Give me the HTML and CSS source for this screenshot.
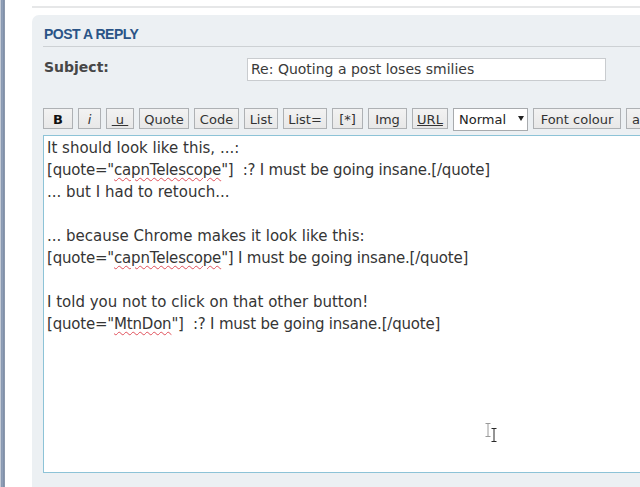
FILE: index.html
```html
<!DOCTYPE html>
<html>
<head>
<meta charset="utf-8">
<link rel="stylesheet" href="styles.css">
</head>
<body>
<div class="page">
  <div class="edge"></div>
  <div class="content">
    <div class="topline"></div>
    <div class="panel">
      <h3 class="title">POST A REPLY</h3>
      <div class="subject-row">
        <label class="label">Subject:</label>
        <div class="input">Re: Quoting a post loses smilies</div>
      </div>
      <div class="toolbar">
        <span class="btn w-b"><b>B</b></span>
        <span class="btn w-i"><i>i</i></span>
        <span class="btn w-u"><span class="ul">&nbsp;u&nbsp;</span></span>
        <span class="btn w-quote">Quote</span>
        <span class="btn w-code">Code</span>
        <span class="btn w-list">List</span>
        <span class="btn w-liste">List=</span>
        <span class="btn w-star">[*]</span>
        <span class="btn w-img">Img</span>
        <span class="btn w-url"><span class="ul">URL</span></span>
        <span class="select">Normal<svg class="caret" width="6" height="5" viewBox="0 0 6 5"><path d="M0 0H6L3 5Z" fill="#222"/></svg></span>
        <span class="btn w-font">Font colour</span>
        <span class="btn w-a">a</span>
      </div>
      <div class="editor">
        <div class="line">It should look like this, ...:</div>
        <div class="line q">[quote="<span class="sp">capnTelescope</span>"]  :? I must be going insane.[/quote]</div>
        <div class="line">... but I had to retouch...</div>
        <div class="line"> </div>
        <div class="line">... because Chrome makes it look like this:</div>
        <div class="line q">[quote="<span class="sp">capnTelescope</span>"] I must be going insane.[/quote]</div>
        <div class="line"> </div>
        <div class="line">I told you not to click on that other button!</div>
        <div class="line q">[quote="<span class="sp">MtnDon</span>"]  :? I must be going insane.[/quote]</div>
        <svg class="cursor" width="16" height="22" viewBox="0 0 16 22">
          <g stroke="#9a9a9a" stroke-width="1" fill="none">
            <path d="M1.5 2.5H6.5M4 2.5V15.5M1.5 15.5H6.5"/>
          </g>
          <g stroke="#2a2a2a" stroke-width="1" fill="none">
            <path d="M7.5 7.5H12.5M10 7.5V20.5M7.5 20.5H12.5"/>
          </g>
        </svg>
      </div>
    </div>
  </div>
</div>
</body>
</html>
```
FILE: styles.css
```css
html, body {
  margin: 0;
  padding: 0;
  background: #ffffff;
}
body {
  width: 640px;
  height: 487px;
  overflow: hidden;
  font-family: "DejaVu Sans", Verdana, sans-serif;
  color: #333;
}
.page {
  display: flex;
  height: 487px;
}
.edge {
  flex: none;
  width: 5px;
  background: linear-gradient(to right, #c3cad6 0, #c3cad6 1px, #8797b0 1px, #92a2ba 3px, #6f7f99 4px, #a9b2c0 5px);
}
.content {
  flex: 1;
  display: flex;
  flex-direction: column;
  padding: 6px 0 0 27px;
  min-width: 0;
}
.topline {
  height: 2px;
  background: #e6e7e8;
  margin-bottom: 7px;
}
.panel {
  flex: 1;
  background: #ecf0f3;
  border-radius: 7px 0 0 0;
  padding: 11px 0 0 11px;
  overflow: hidden;
}
.title {
  margin: 0;
  font-family: "Liberation Sans", Arial, sans-serif;
  font-size: 14px;
  line-height: 16px;
  font-weight: bold;
  letter-spacing: -0.5px;
  color: #2a5487;
  padding: 0 0 4px 1px;
  border-bottom: 1px solid #cdd1d4;
}
.subject-row {
  display: flex;
  align-items: flex-start;
  margin-top: 11px;
}
.label {
  flex: none;
  width: 204px;
  font-weight: bold;
  font-size: 14px;
  line-height: 19px;
  color: #474747;
  padding-left: 1px;
  box-sizing: border-box;
}
.input {
  flex: none;
  width: 359px;
  height: 23px;
  box-sizing: border-box;
  background: #fff;
  border: 1px solid #c9cccf;
  font-size: 14px;
  line-height: 21px;
  padding-left: 3px;
  color: #3a3a3a;
}
.toolbar {
  display: flex;
  gap: 5px;
  margin-top: 27px;
  white-space: nowrap;
  align-items: flex-start;
}
.btn {
  flex: none;
  box-sizing: border-box;
  height: 21px;
  border: 1px solid #aeb1b4;
  background: linear-gradient(#f2f2f2, #e8e8e8);
  font-size: 13px;
  line-height: 17px;
  padding-top: 2px;
  text-align: center;
  color: #333;
}
.btn b { font-size: 13px; color: #111; }
.btn i { font-family: "DejaVu Sans", sans-serif; }
.ul { text-decoration: underline; }
.w-b { width: 30px; }
.w-i { width: 23px; }
.w-u { width: 28px; }
.w-quote { width: 50px; }
.w-code { width: 45px; }
.w-list { width: 34px; }
.w-liste { width: 44px; }
.w-star { width: 31px; }
.w-img { width: 39px; }
.w-url { width: 36px; }
.w-font { width: 88px; }
.w-a { width: 30px; text-align: left; padding-left: 5px; }
.select {
  flex: none;
  box-sizing: border-box;
  width: 75px;
  height: 23px;
  border: 1px solid #a8abae;
  background: #fff;
  font-size: 13px;
  line-height: 19px;
  padding: 1px 0 0 5px;
  color: #222;
  position: relative;
}
.caret {
  position: absolute;
  left: 64px;
  top: 7px;
}
.editor {
  position: relative;
  margin-top: 4px;
  width: 640px;
  height: 338px;
  box-sizing: border-box;
  background: #fff;
  border: 1px solid #8dc3d7;
  padding: 1px 0 0 3px;
  font-size: 15px;
  line-height: 22px;
  color: #353535;
}
.line {
  height: 22px;
  white-space: pre;
}
.q { letter-spacing: -0.2px; }
.sp {
  text-decoration: underline wavy #e0505a;
  text-decoration-thickness: 1px;
  text-underline-offset: 2px;
}
.cursor {
  position: absolute;
  left: 440px;
  top: 285px;
}
```
